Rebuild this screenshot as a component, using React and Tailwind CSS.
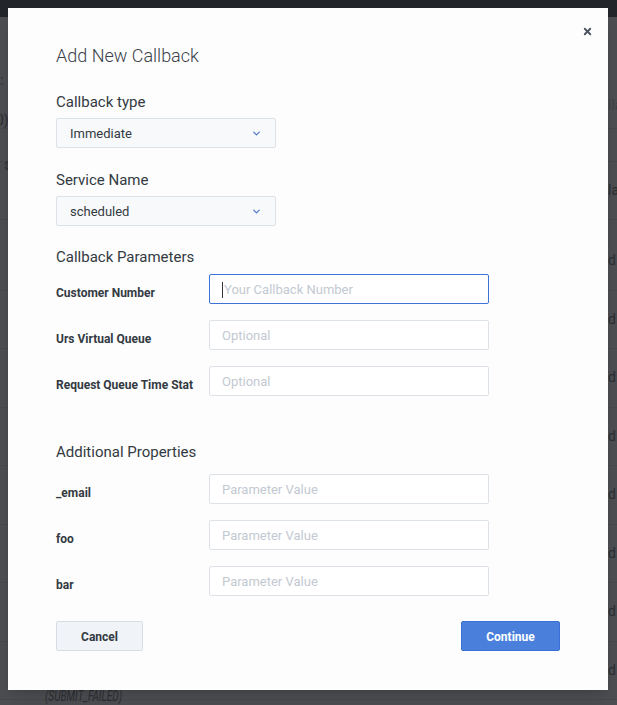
import { ChevronDown, X } from "lucide-react"

const font = { fontFamily: "Roboto, 'Noto Sans', Arial, sans-serif" }

function Heading({ children, className = "" }) {
    return <div className={`text-[15px] leading-[20px] pt-[2px] text-[#333a42] ${className}`}>{children}</div>
}

function SelectBox({ value }) {
    return (
        <div className="w-[220px] h-[30px] flex items-center justify-between pl-[13px] pr-[13px] pt-px bg-[#f8f9fb] border border-[#dde2e8] rounded-[2px] text-[13px] text-[#333a42]">
            <span>{value}</span>
            <ChevronDown className="w-[11px] h-[11px] text-[#4a72c8]" strokeWidth={2.5} />
        </div>
    )
}

function FieldRow({ label, placeholder, focused }) {
    return (
        <div className="flex items-start">
            <div className="w-[153px] pt-[11px] text-[12px] leading-[16px] font-bold text-[#333a42]">{label}</div>
            <div
                className={`w-[280px] h-[30px] flex items-center pl-[12px] pt-px bg-white rounded-[2px] text-[13px] text-[#c3c9d2] border ${
                    focused ? "border-[#3b73d9]" : "border-[#dde2e8]"
                }`}
            >
                {focused && <span className="w-px h-[16px] bg-[#333] mr-px" />}
                {placeholder}
            </div>
        </div>
    )
}

const rightBits = ["d", "d", "d", "d", "d", "d", "d", "d"]

export default function App() {
    return (
        <div style={font} className="relative w-[617px] h-[705px] overflow-hidden bg-[#4b4d51]">
            {/* Page behind the overlay */}
            <div className="h-[17px] bg-[#222529]" />
            <div className="flex justify-end pt-[78px] text-[14px] text-[#2b2d31]">
                <div className="w-[9px] overflow-hidden text-[#3e4044]">lla</div>
            </div>
            <div className="mt-[12px] border-t border-[#45474b]" />
            <div className="mt-[32px] border-t border-[#45474b]" />
            <div className="flex justify-end pt-[18px] pb-[18px] text-[14px] text-[#2b2d31] border-b border-[#45474b]">
                <div className="w-[9px] overflow-hidden">la</div>
            </div>
            <div className="mt-[12px]">
                {rightBits.map((t, i) => (
                    <div
                        key={i}
                        className="h-[58.5px] flex items-center justify-end text-[14px] text-[#2b2d31] border-b border-[#46484c]"
                    >
                        <div className="w-[9px] overflow-hidden">{t}</div>
                    </div>
                ))}
            </div>
            <div className="absolute left-[45px] top-[686px] text-[14px] italic text-[#2b2d31] origin-left scale-x-[0.72]">
                (SUBMIT_FAILED)
            </div>
            <div className="absolute left-0 top-[70px] text-[14px] text-[#2b2d31]">:</div>
            <div className="absolute left-[-4px] top-[110px] text-[14px] text-[#2b2d31]">0)</div>
            <div className="absolute left-[2px] top-[157px] text-[12px] text-[#2b2d31]">⇕</div>

            {/* Modal */}
            <div className="absolute left-[8px] top-[8px] w-[600px] h-[682px] bg-[#fdfdfd] shadow-lg">
                <button className="absolute right-[15px] top-[18px] text-[#4a5460]">
                    <X className="w-[11px] h-[11px]" strokeWidth={4} />
                </button>
                <div className="pt-[36px] px-[48px]">
                    <div className="text-[18px] leading-[24px] font-light text-[#3b4148]">Add New Callback</div>

                    <Heading className="mt-[22px] mb-[6px]">Callback type</Heading>
                    <SelectBox value="Immediate" />

                    <Heading className="mt-[20px] mb-[6px]">Service Name</Heading>
                    <SelectBox value="scheduled" />

                    <Heading className="mt-[19px] mb-[7px]">Callback Parameters</Heading>
                    <div className="flex flex-col gap-[16px]">
                        <FieldRow label="Customer Number" placeholder="Your Callback Number" focused />
                        <FieldRow label="Urs Virtual Queue" placeholder="Optional" />
                        <FieldRow label="Request Queue Time Stat" placeholder="Optional" />
                    </div>

                    <Heading className="mt-[44px] mb-[12px]">Additional Properties</Heading>
                    <div className="flex flex-col gap-[16px]">
                        <FieldRow label="_email" placeholder="Parameter Value" />
                        <FieldRow label="foo" placeholder="Parameter Value" />
                        <FieldRow label="bar" placeholder="Parameter Value" />
                    </div>

                    <div className="mt-[25px] flex justify-between">
                        <button className="w-[87px] h-[30px] pt-px bg-[#f0f3f7] border border-[#d8dde4] rounded-[2px] text-[12px] font-bold text-[#333a42]">
                            Cancel
                        </button>
                        <button className="w-[99px] h-[30px] pt-px bg-[#4a7fdc] border border-[#3a70d8] rounded-[2px] text-[12px] font-bold text-white">
                            Continue
                        </button>
                    </div>
                </div>
            </div>
        </div>
    )
}
